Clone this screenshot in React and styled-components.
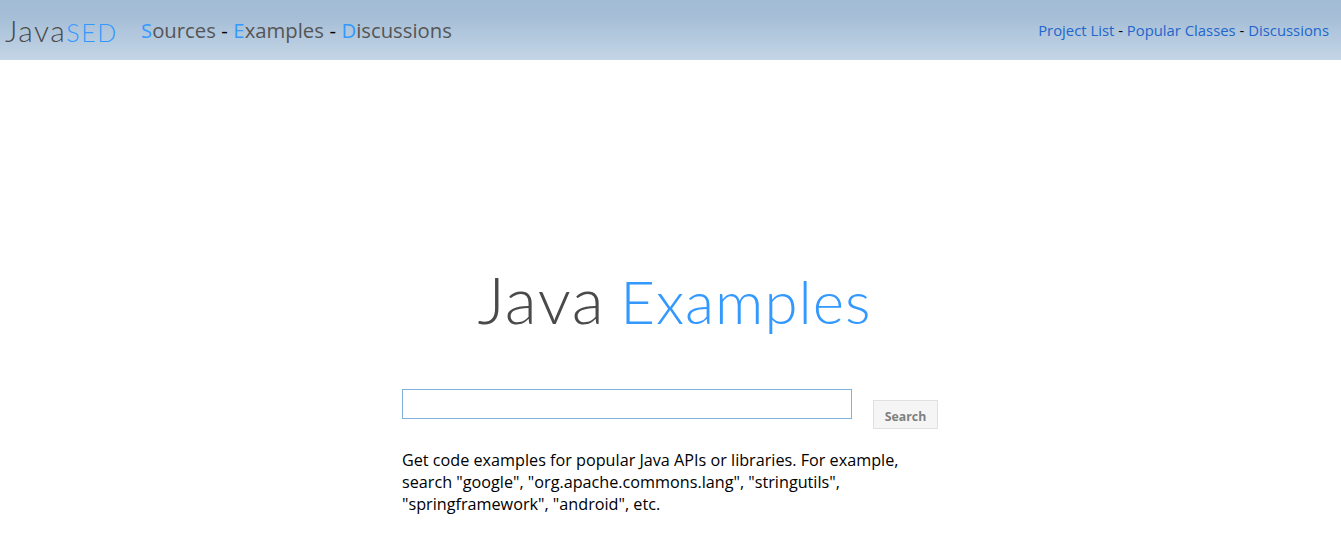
import styled, { createGlobalStyle } from "styled-components";

const GlobalStyle = createGlobalStyle`
  html, body {
    margin: 0;
    padding: 0;
    background: #fff;
    font-family: "Open Sans", sans-serif;
    color: #000;
  }
`;

const App = () => {
  return (
    <>
      <GlobalStyle />
      <Header>
        <Logo>
          Java<LogoAccent>SED</LogoAccent>
        </Logo>
        <MainNav>
          <NavItem><Initial>S</Initial>ources</NavItem>
          <NavDash>-</NavDash>
          <NavItem><Initial>E</Initial>xamples</NavItem>
          <NavDash>-</NavDash>
          <NavItem><Initial>D</Initial>iscussions</NavItem>
        </MainNav>
        <SideNav>
          <SideLink>Project List</SideLink> - <SideLink>Popular Classes</SideLink> - <SideLink>Discussions</SideLink>
        </SideNav>
      </Header>
      <Main>
        <Title>
          <TitleDark>Java</TitleDark> <TitleAccent>Examples</TitleAccent>
        </Title>
        <SearchRow>
          <SearchInput type="text" />
          <SearchButton>Search</SearchButton>
        </SearchRow>
        <Help>
          Get code examples for popular Java APIs or libraries. For example,
          search "google", "org.apache.commons.lang", "stringutils",
          "springframework", "android", etc.
        </Help>
      </Main>
    </>
  );
};

export default App;

const Header = styled.header`
  display: flex;
  align-items: center;
  height: 60px;
  padding: 0 12px 0 5px;
  box-sizing: border-box;
  background: linear-gradient(to bottom, #a2bcd5 0%, #a6bfd7 30%, #c4d5e6 100%);
`;

const Logo = styled.div`
  font-family: "Lato", sans-serif;
  font-size: 30px;
  font-weight: 300;
  letter-spacing: 1.5px;
  color: #4a4a4a;
  width: 136px;
`;

const LogoAccent = styled.span`
  color: #3399ff;
  font-size: 25px;
  letter-spacing: 1.5px;
`;

const MainNav = styled.nav`
  display: flex;
  align-items: center;
  gap: 5.5px;
  font-size: 20.3px;
  color: #555;
`;

const NavItem = styled.span``;

const NavDash = styled.span`
  color: #000;
`;

const Initial = styled.span`
  color: #3399ff;
`;

const SideNav = styled.nav`
  margin-left: auto;
  font-size: 14.85px;
  color: #000;
`;

const SideLink = styled.a`
  color: #2266cc;
`;

const Main = styled.main`
  width: 540px;
  margin: 0 auto;
  padding-left: 3px;
  box-sizing: content-box;
`;

const Title = styled.h1`
  margin: 194px 0 0;
  padding-left: 5px;
  height: 95px;
  font-family: "Lato", sans-serif;
  font-size: 66px;
  line-height: 89px;
  font-weight: 300;
  text-align: center;
  white-space: nowrap;
`;

const TitleDark = styled.span`
  color: #4a4a4a;
  letter-spacing: 1.5px;
`;

const TitleAccent = styled.span`
  color: #3399ff;
  font-size: 60px;
  letter-spacing: 1px;
  margin-left: -3px;
`;

const SearchRow = styled.div`
  display: flex;
  align-items: flex-start;
  gap: 21px;
  margin-top: 40px;
`;

const SearchInput = styled.input`
  width: 450px;
  height: 30px;
  box-sizing: border-box;
  border: 1px solid #7fb0e0;
  outline: none;
  padding: 0 6px;
`;

const SearchButton = styled.button`
  width: 65px;
  height: 29px;
  margin-top: 11px;
  box-sizing: border-box;
  border: 1px solid #e0e0e0;
  background: #f5f5f5;
  color: #808080;
  font-family: "Open Sans", sans-serif;
  font-size: 12.3px;
  font-weight: 700;
  padding: 4px 0 0;
`;

const Help = styled.p`
  margin: 20px 0 0;
  font-size: 16.2px;
  line-height: 22px;
`;
